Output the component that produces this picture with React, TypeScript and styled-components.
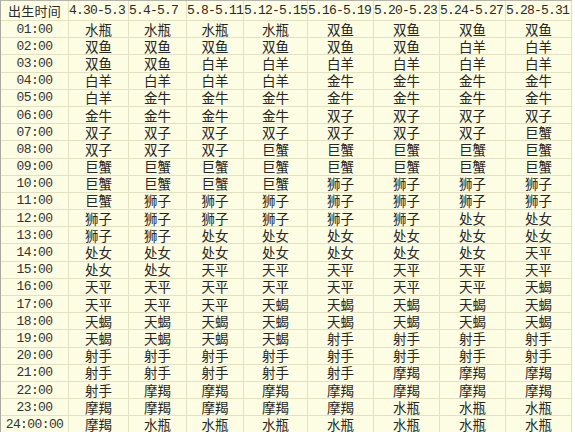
import React from "react";
import styled, { createGlobalStyle } from "styled-components";

const GlobalStyle = createGlobalStyle`
  html, body {
    margin: 0;
    padding: 0;
    background: #ffffff;
  }
`;

const lineColor = "#e2e2c2";
const cellColor = "#fdfde3";
const monoFont = `"Liberation Mono", "DejaVu Sans Mono", monospace`;
const cjkFont = `"Noto Sans CJK SC", "Noto Sans", sans-serif`;

const columnWidths = [67, 59, 57, 56, 63, 65, 65, 65, 65];

const Sheet = styled.div`
  display: grid;
  grid-template-columns: ${columnWidths.map((w) => `${w}px`).join(" ")};
  grid-template-rows: 19px repeat(24, 16.2px);
  gap: 1px;
  width: max-content;
  background: ${lineColor};
  border-left: 1px solid #a9a9a0;
  border-top: 1px solid #b4b4a8;
  border-right: 1px solid ${lineColor};
  overflow: hidden;
`;

const Cell = styled.div`
  background: ${cellColor};
  color: #2a2a2a;
  display: flex;
  align-items: center;
  white-space: nowrap;
  line-height: 15px;
`;

const CornerCell = styled(Cell)`
  justify-content: center;
  font-family: ${cjkFont};
  font-size: 13px;
  letter-spacing: 0.3px;
`;

const DateCell = styled(Cell)`
  justify-content: flex-start;
  font-family: ${monoFont};
  font-size: 13px;
  letter-spacing: -0.8px;
`;

const TimeCell = styled(Cell)`
  justify-content: center;
  font-family: ${monoFont};
  font-size: 13px;
  letter-spacing: -0.6px;
  color: #333333;
`;

const SignCell = styled(Cell)`
  justify-content: center;
  font-family: ${cjkFont};
  font-size: 13.5px;
  color: #262626;
`;

const dates = [
  "4.30-5.3",
  "5.4-5.7",
  "5.8-5.11",
  "5.12-5.15",
  "5.16-5.19",
  "5.20-5.23",
  "5.24-5.27",
  "5.28-5.31"
];

const rows: [string, string][] = [
  ["01:00", "水瓶 水瓶 水瓶 水瓶 双鱼 双鱼 双鱼 双鱼"],
  ["02:00", "双鱼 双鱼 双鱼 双鱼 双鱼 双鱼 白羊 白羊"],
  ["03:00", "双鱼 双鱼 白羊 白羊 白羊 白羊 白羊 白羊"],
  ["04:00", "白羊 白羊 白羊 白羊 金牛 金牛 金牛 金牛"],
  ["05:00", "白羊 金牛 金牛 金牛 金牛 金牛 金牛 金牛"],
  ["06:00", "金牛 金牛 金牛 金牛 双子 双子 双子 双子"],
  ["07:00", "双子 双子 双子 双子 双子 双子 双子 巨蟹"],
  ["08:00", "双子 双子 双子 巨蟹 巨蟹 巨蟹 巨蟹 巨蟹"],
  ["09:00", "巨蟹 巨蟹 巨蟹 巨蟹 巨蟹 巨蟹 巨蟹 巨蟹"],
  ["10:00", "巨蟹 巨蟹 巨蟹 巨蟹 狮子 狮子 狮子 狮子"],
  ["11:00", "巨蟹 狮子 狮子 狮子 狮子 狮子 狮子 狮子"],
  ["12:00", "狮子 狮子 狮子 狮子 狮子 狮子 处女 处女"],
  ["13:00", "狮子 狮子 处女 处女 处女 处女 处女 处女"],
  ["14:00", "处女 处女 处女 处女 处女 处女 处女 天平"],
  ["15:00", "处女 处女 天平 天平 天平 天平 天平 天平"],
  ["16:00", "天平 天平 天平 天平 天平 天平 天平 天蝎"],
  ["17:00", "天平 天平 天平 天蝎 天蝎 天蝎 天蝎 天蝎"],
  ["18:00", "天蝎 天蝎 天蝎 天蝎 天蝎 天蝎 天蝎 天蝎"],
  ["19:00", "天蝎 天蝎 天蝎 天蝎 射手 射手 射手 射手"],
  ["20:00", "射手 射手 射手 射手 射手 射手 射手 射手"],
  ["21:00", "射手 射手 射手 射手 射手 摩羯 摩羯 摩羯"],
  ["22:00", "射手 摩羯 摩羯 摩羯 摩羯 摩羯 摩羯 摩羯"],
  ["23:00", "摩羯 摩羯 摩羯 摩羯 摩羯 水瓶 水瓶 水瓶"],
  ["24:00:00", "摩羯 水瓶 水瓶 水瓶 水瓶 水瓶 水瓶 水瓶"]
];

const App = () => {
  return (
    <>
      <GlobalStyle />
      <Sheet>
        <CornerCell>出生时间</CornerCell>
        {dates.map((d) => (
          <DateCell key={d}>{d}</DateCell>
        ))}
        {rows.map(([time, signs]) => (
          <React.Fragment key={time}>
            <TimeCell>{time}</TimeCell>
            {signs.split(" ").map((sign, i) => (
              <SignCell key={i}>{sign}</SignCell>
            ))}
          </React.Fragment>
        ))}
      </Sheet>
    </>
  );
};

export default App;
